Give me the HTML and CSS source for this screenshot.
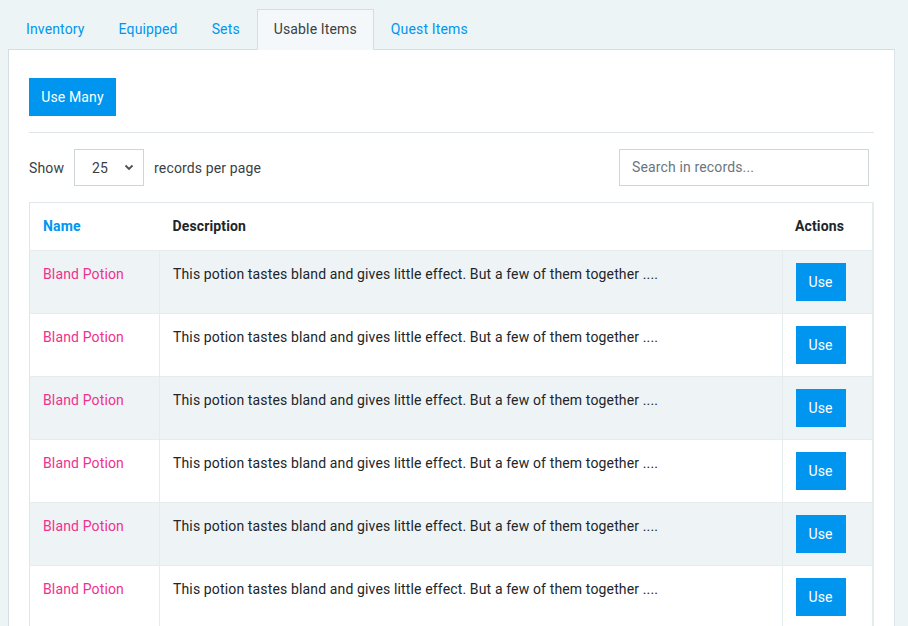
FILE: index.html
```html
<!DOCTYPE html>
<html>
<head>
<meta charset="utf-8">
<link rel="stylesheet" href="styles.css">
</head>
<body>
<div class="wrap">
  <ul class="tabs">
    <li class="tab">Inventory</li>
    <li class="tab">Equipped</li>
    <li class="tab">Sets</li>
    <li class="tab active">Usable Items</li>
    <li class="tab">Quest Items</li>
  </ul>
  <div class="panel">
    <button class="btn btn-many">Use Many</button>
    <hr class="sep">
    <div class="controls">
      <div class="show">
        <span>Show</span>
        <div class="select"><span>25</span>
          <svg width="10" height="7" viewBox="0 0 10 7"><path d="M1.5 1.5 L5 5 L8.5 1.5" fill="none" stroke="#495057" stroke-width="1.8"/></svg>
        </div>
        <span>records per page</span>
      </div>
      <div class="search">Search in records...</div>
    </div>
    <table class="records">
      <thead>
        <tr><th class="c-name">Name</th><th class="c-desc">Description</th><th class="c-act">Actions</th></tr>
      </thead>
      <tbody>
        <tr><td class="name">Bland Potion</td><td>This potion tastes bland and gives little effect. But a few of them together ....</td><td><button class="btn btn-use">Use</button></td></tr>
        <tr><td class="name">Bland Potion</td><td>This potion tastes bland and gives little effect. But a few of them together ....</td><td><button class="btn btn-use">Use</button></td></tr>
        <tr><td class="name">Bland Potion</td><td>This potion tastes bland and gives little effect. But a few of them together ....</td><td><button class="btn btn-use">Use</button></td></tr>
        <tr><td class="name">Bland Potion</td><td>This potion tastes bland and gives little effect. But a few of them together ....</td><td><button class="btn btn-use">Use</button></td></tr>
        <tr><td class="name">Bland Potion</td><td>This potion tastes bland and gives little effect. But a few of them together ....</td><td><button class="btn btn-use">Use</button></td></tr>
        <tr><td class="name">Bland Potion</td><td>This potion tastes bland and gives little effect. But a few of them together ....</td><td><button class="btn btn-use">Use</button></td></tr>
      </tbody>
    </table>
  </div>
</div>
</body>
</html>
```
FILE: styles.css
```css
* { box-sizing: border-box; }
html, body { margin: 0; padding: 0; }
body {
  background: #edf4f6;
  font-family: Roboto, "Liberation Sans", sans-serif;
  font-size: 14px;
  letter-spacing: 0.14px;
  color: #212529;
  overflow: hidden;
}
.wrap {
  margin: 0 13px 0 8px;
  padding-top: 9px;
}
.tabs {
  list-style: none;
  margin: 0 0 -1px 0;
  padding: 0 0 0 1px;
  display: flex;
  position: relative;
  z-index: 1;
}
.tab {
  padding: 8px 16px 9px 16px;
  line-height: 22px;
  color: #0096f0;
  border: 1px solid transparent;
  border-bottom: none;
}
.tab.active {
  background: #f4f8fa;
  border-color: #d5dde0;
  color: #3a3f44;
  border-bottom: 1px solid #f4f8fa;
}
.panel {
  background: #fff;
  border: 1px solid #d5dde0;
  border-right-color: #dde4e7;
  padding: 28px 20px 0 20px;
  min-height: 640px;
}
.btn {
  background: #0096f0;
  color: #fff;
  border: none;
  font-family: Roboto, "Liberation Sans", sans-serif;
  font-size: 14px;
  letter-spacing: 0.14px;
  line-height: 22px;
  padding: 0;
  border-radius: 0;
}
.btn-many {
  height: 38px;
  width: 87px;
  display: block;
}
.sep {
  border: none;
  border-top: 1px solid #dfe5e8;
  margin: 16px 0 16px 0;
  height: 0;
}
.controls {
  display: flex;
  justify-content: space-between;
  align-items: center;
  padding-right: 5px;
}
.show {
  display: flex;
  align-items: center;
  gap: 10px;
  color: #3a3f44;
}
.select {
  width: 70px;
  height: 37px;
  border: 1px solid #cfd6da;
  display: flex;
  align-items: center;
  justify-content: space-between;
  padding: 0 9px 0 17px;
  color: #3a3f44;
}
.search {
  width: 250px;
  height: 37px;
  border: 1px solid #cfd6da;
  padding: 0 12px;
  line-height: 35px;
  color: #6c757d;
}
.records {
  width: 100%;
  margin-top: 16px;
  border-collapse: collapse;
  border: 1px solid #dfe5e8;
  border-right: 2px solid #e6ecee;
}
.records th, .records td {
  padding: 12px 12px 12px 13px;
  line-height: 22px;
  text-align: left;
  vertical-align: top;
}
.records th {
  font-weight: 700;
  padding: 12px 12px 13px 13px;
}
.records th.c-name { color: #0096f0; width: 130px; }
.records th.c-act { width: 91px; }
.records tbody tr { border-top: 1px solid #e6ecee; }
.records tbody tr:nth-child(odd) { background: #eef4f6; }
.records tbody td + td { border-left: 1px solid #e6ecee; }
.records td.name { color: #f0308f; }
.btn-use {
  width: 50px;
  height: 38px;
  display: block;
}
```
